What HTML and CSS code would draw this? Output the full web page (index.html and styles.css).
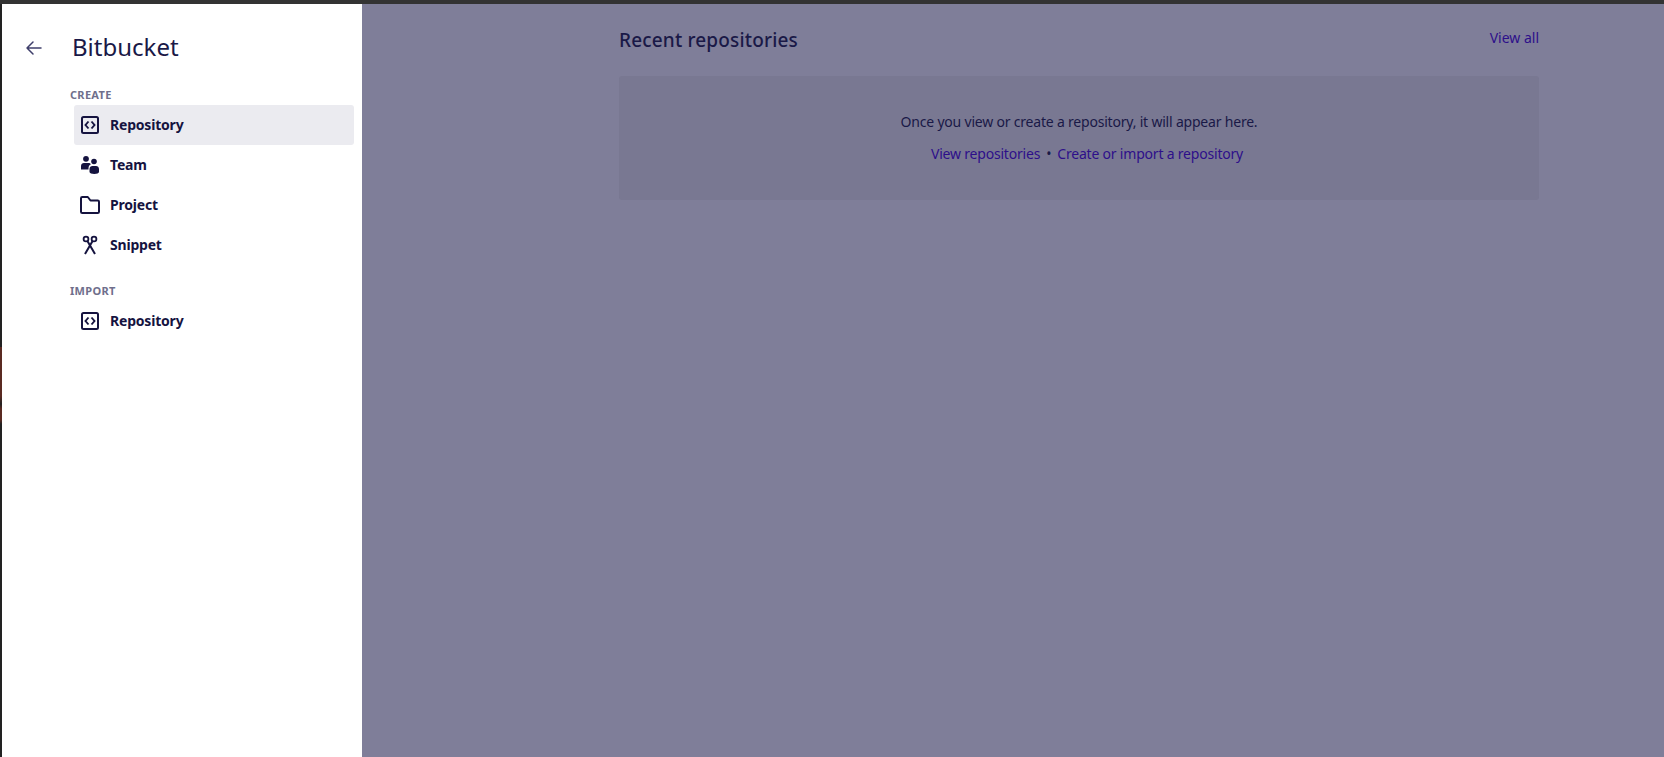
FILE: index.html
```html
<!DOCTYPE html>
<html>
<head>
    <title>Bitbucket</title>
    <link rel="stylesheet" href="styles.css">
</head>
<body>
    <div class="topbar"></div>
    <div class="window">
        <div class="edge"></div>
        <aside class="drawer">
            <div class="drawer-head">
                <a class="back" href="#">
                    <svg width="24" height="24" viewBox="0 0 24 24"><path d="M5 12h14M11 6 5 12l6 6" fill="none" stroke="currentColor" stroke-width="1.500" stroke-linecap="round" stroke-linejoin="round"/></svg>
                </a>
                <span class="drawer-title">Bitbucket</span>
            </div>
            <div class="group-label group-first">CREATE</div>
            <a class="item active" href="#">
                <svg class="icon" viewBox="0 0 24 24"><rect x="4" y="4" width="16" height="16" rx="1.500" fill="none" stroke="currentColor" stroke-width="2"/><path d="M10.500 8.500 7.500 12l3 3.500M13.500 8.500l3 3.500-3 3.500" fill="none" stroke="currentColor" stroke-width="1.900"/></svg>
                <span>Repository</span>
            </a>
            <a class="item" href="#">
                <svg class="icon" viewBox="0 0 24 24"><circle cx="8" cy="5.800" r="2.900" fill="currentColor"/><circle cx="16" cy="8.500" r="2.800" fill="currentColor"/><path d="M3 16.500v-3.500C3 11.300 4.300 10 6 10h4.500c1 0 1.900.5 2.400 1.300-1.600.7-2.400 2.200-2.400 3.900v1.300H3Z" fill="currentColor"/><path d="M11.500 16c0-1.700 1.300-3 3-3h3.500c1.700 0 3 1.300 3 3v3c0 1.300-2.300 2-4.700 2s-4.800-.7-4.800-2v-3Z" fill="currentColor"/></svg>
                <span>Team</span>
            </a>
            <a class="item" href="#">
                <svg class="icon" viewBox="0 0 24 24"><path d="M3 5.300C3 4.600 3.600 4 4.300 4h5.500l2.700 3.500h7.200c.7 0 1.300.6 1.300 1.300v9.900c0 .7-.6 1.300-1.300 1.300H4.300C3.600 20 3 19.400 3 18.700V5.300Z" fill="none" stroke="currentColor" stroke-width="2" stroke-linejoin="round"/></svg>
                <span>Project</span>
            </a>
            <a class="item" href="#">
                <svg class="icon" viewBox="0 0 24 24"><circle cx="8" cy="6" r="2.400" fill="none" stroke="currentColor" stroke-width="1.800"/><circle cx="16" cy="6" r="2.400" fill="none" stroke="currentColor" stroke-width="1.800"/><path d="M9.400 8 17 21M14.600 8 7 21" fill="none" stroke="currentColor" stroke-width="2"/></svg>
                <span>Snippet</span>
            </a>
            <div class="group-label">IMPORT</div>
            <a class="item" href="#">
                <svg class="icon" viewBox="0 0 24 24"><rect x="4" y="4" width="16" height="16" rx="1.500" fill="none" stroke="currentColor" stroke-width="2"/><path d="M10.500 8.500 7.500 12l3 3.500M13.500 8.500l3 3.500-3 3.500" fill="none" stroke="currentColor" stroke-width="1.900"/></svg>
                <span>Repository</span>
            </a>
        </aside>
        <main class="content">
            <div class="section-head">
                <h2>Recent repositories</h2>
                <a href="#">View all</a>
            </div>
            <div class="empty">
                <p>Once you view or create a repository, it will appear here.</p>
                <p class="links"><a href="#">View repositories</a><span class="dot">•</span><a href="#">Create or import a repository</a></p>
            </div>
        </main>
    </div>
</body>
</html>
```

FILE: styles.css
```css
html, body {
    height: 100%;
}

body {
    margin: 0;
    display: flex;
    flex-direction: column;
    overflow: hidden;
    background: #7f7e99;
    font-family: "Noto Sans", sans-serif;
    font-size: 14px;
    color: #1a1947;
}

a {
    text-decoration: none;
}

.topbar {
    height: 4px;
    background: #333333;
}

.window {
    flex: 1;
    display: flex;
}

.edge {
    width: 2px;
    background: linear-gradient(#222222 0, #222222 343px, #5a2a22 343px, #5a2a22 392px, #222222 400px, #5a2a22 405px, #5a2a22 416px, #222222 420px);
}

.drawer {
    width: 360px;
    background: #ffffff;
    padding-top: 25px;
    box-sizing: border-box;
}

.drawer-head {
    display: flex;
    align-items: center;
    height: 36px;
    padding-left: 20px;
}

.back {
    display: flex;
    width: 50px;
    margin-top: 2px;
    color: #3f3f6b;
}

.drawer-title {
    margin-top: -2px;
    font-size: 24px;
    color: #1a1947;
}

.group-label {
    margin: 17px 0 0 68px;
    height: 19px;
    line-height: 18px;
    font-size: 11px;
    font-weight: 700;
    letter-spacing: 0.3px;
    color: #6f6f8c;
}

.group-first {
    margin-top: 21px;
}

.item {
    display: flex;
    align-items: center;
    height: 40px;
    margin: 0 8px 0 72px;
    padding-left: 4px;
    border-radius: 3px;
    font-weight: 700;
    letter-spacing: -0.2px;
    color: #15133f;
}

.item span {
    margin-bottom: 2px;
}

.item.active {
    background: #ebebf0;
}

.icon {
    width: 24px;
    height: 24px;
    margin-right: 8px;
}

.content {
    flex: 1;
    padding: 0 125px 0 257px;
}

.section-head {
    display: flex;
    justify-content: space-between;
    height: 72px;
}

.section-head h2 {
    margin: 22px 0 0;
    font-size: 19px;
    font-weight: 500;
    line-height: 28px;
    letter-spacing: 0.17px;
}

.section-head a {
    margin-top: 25px;
    line-height: 18px;
    color: #2d0f8a;
}

.empty {
    height: 124px;
    box-sizing: border-box;
    padding-top: 36px;
    background: #797892;
    border-radius: 3px;
    text-align: center;
    letter-spacing: -0.2px;
}

.empty p {
    margin: 0 0 12px;
    line-height: 20px;
}

.empty .links {
    padding-left: 16px;
}

.links a {
    color: #2d0f8a;
}

.dot {
    margin: 0 6px;
}
```
